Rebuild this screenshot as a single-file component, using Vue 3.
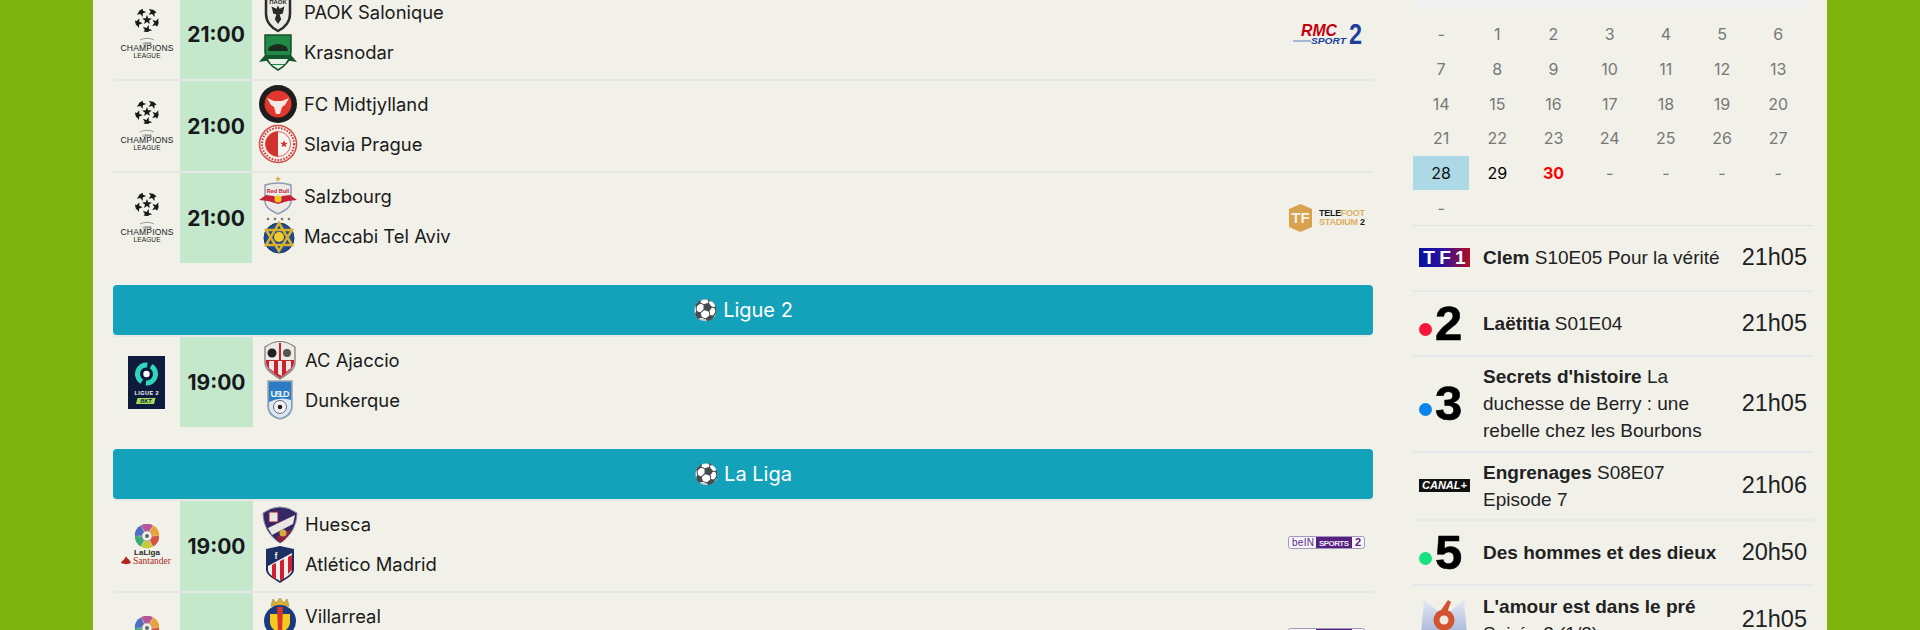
<template>
  <div class="page">
    <div class="panel">
      <main class="matches">
        <template v-for="group in groups" :key="group.id">
          <div v-if="group.name" class="banner"><span>⚽</span> {{ group.name }}</div>
          <div v-for="(m, i) in group.rows" :key="i" class="row" :class="{ wide: group.name, end: i === group.rows.length - 1 && group.id !== 'liga' }">
            <div class="league">
              <!-- Champions League -->
              <svg v-if="m.league === 'ucl'" width="56" height="54" viewBox="0 0 56 54">
                <defs>
                  <clipPath id="ball"><circle cx="28" cy="13" r="12" /></clipPath>
                </defs>
                <g clip-path="url(#ball)" fill="#1a1a1a">
                  <path :d="star(28, 13, 5)" />
                  <path v-for="(s, k) in ballStars" :key="k" :d="star(s[0], s[1], 5.200, s[2])" />
                </g>
                <path d="M21 33q7-3.500 14 0" fill="none" stroke="#666" stroke-width=".6" />
                <text x="28" y="37.500" class="ucl-uefa">UEFA</text>
                <text x="28" y="44" class="ucl-big" textLength="53">CHAMPIONS</text>
                <text x="28" y="51" class="ucl-small" textLength="27">LEAGUE</text>
              </svg>
              <!-- Ligue 2 -->
              <svg v-else-if="m.league === 'l2'" width="37" height="53" viewBox="0 0 37 53">
                <rect width="37" height="53" fill="#0e1b3d" />
                <circle cx="18.500" cy="18" r="9" fill="none" stroke="#2fd6bb" stroke-width="5" stroke-dasharray="24 4.300" transform="rotate(-60 18.500 18)" />
                <circle cx="18.500" cy="18" r="3.200" fill="#fff" />
                <text x="18.500" y="39" class="l2-text" textLength="24">LIGUE 2</text>
                <path d="M9.500 42h18l-1.500 6h-18z" fill="#a5dc5a" />
                <text x="18" y="47" class="l2-bkt">BKT</text>
              </svg>
              <!-- La Liga -->
              <svg v-else width="54" height="44" viewBox="0 0 54 44">
                <path v-for="p in ligaPetals" :key="p.c" d="M27 11 L21 1.500 A11 11 0 0 1 33 1.500 Z" :fill="p.c" :transform="`rotate(${p.a} 27 12)`" />
                <circle cx="27" cy="12" r="5" fill="#f1f1e9" stroke="#888" stroke-width=".6" />
                <circle cx="27" cy="12" r="2" fill="#666" />
                <text x="27" y="31" class="liga-top">LaLiga</text>
                <text x="32" y="40" class="liga-sub" textLength="38">Santander</text>
                <path d="M1 39c1-3 4-3 5-7 1 3 4 3 5 7-3 1.500-7 1.500-10 0z" fill="#b3261e" />
              </svg>
            </div>
            <div class="kickoff">{{ m.time }}</div>
            <div class="teams">
              <div v-for="t in m.teams" :key="t.name" class="team">
                <svg class="crest" width="40" height="40" viewBox="0 0 40 40">
                  <g v-if="t.id === 'paok'">
                    <path d="M8 -6h24v28c0 8-6 14-12 17-6-3-12-9-12-17z" fill="#eceae4" stroke="#2b2b2b" stroke-width="2.500" />
                    <path d="M20 7l2 4 6-3-2 9-4 1 2 6-4 6-4-6 2-6-4-1-2-9 6 3z" fill="#2b2b2b" transform="translate(4 8) scale(.8)" />
                    <text x="20" y="12" class="crest-txt">ΠΑΟΚ</text>
                  </g>
                  <g v-else-if="t.id === 'krasnodar'">
                    <path d="M7 3h26v17c0 9-6 14-13 18C13 34 7 29 7 20z" fill="#1f8a45" stroke="#174d2b" stroke-width="1.500" />
                    <path d="M11 15q9-6 18 0l1 4H10z" fill="#1d2a20" />
                    <path d="M1 30l6-7h26l6 7-6-1H7z" fill="#14552c" />
                    <path d="M10 27h20l-3 5h-14zM14 33h12l-6 4z" fill="#e8efe6" />
                  </g>
                  <g v-else-if="t.id === 'midtjylland'">
                    <circle cx="20" cy="20" r="19" fill="#1d1d1d" />
                    <circle cx="20" cy="20" r="13.500" fill="#e2372f" />
                    <path d="M9 14l7 3h8l7-3-4 7-3 2-2 7h-4l-2-7-3-2z" fill="#f7eae6" />
                  </g>
                  <g v-else-if="t.id === 'slavia'">
                    <circle cx="20" cy="20" r="18.500" fill="#f3ece8" stroke="#cf4a44" stroke-width="1.500" />
                    <circle cx="20" cy="20" r="12.500" fill="#f7f4f0" stroke="#cf4a44" stroke-width=".8" />
                    <path d="M20 7.500a12.500 12.500 0 0 0 0 25z" fill="#d2322d" />
                    <path :d="star(26, 20, 4)" fill="#d2322d" />
                    <circle cx="20" cy="20" r="16" fill="none" stroke="#d2322d" stroke-width="2" stroke-dasharray="1.500 1.500" />
                  </g>
                  <g v-else-if="t.id === 'salzburg'">
                    <path :d="star(20, 3, 3)" fill="#d9a93a" />
                    <path d="M7 9q13-4 26 0v16c0 7-7 10-13 13-6-3-13-6-13-13z" fill="#ece9e6" stroke="#8d9cb3" stroke-width="1.500" />
                    <path d="M1 24l7-5 8 1 4 5 4-5 8-1 7 5-9 1-10 3-10-3z" fill="#c6203a" />
                    <circle cx="20" cy="23" r="3.500" fill="#f3c51d" />
                    <text x="20" y="17" class="crest-red">Red Bull</text>
                  </g>
                  <g v-else-if="t.id === 'maccabi'">
                    <circle v-for="x in [10, 17, 24, 31]" :key="x" :cx="x" cy="3" r="1.300" fill="#777" />
                    <circle cx="21" cy="22" r="15" fill="#1c4a95" stroke="#20365f" />
                    <path d="M21 7l13 22H8zM21 35L8 14h26z" fill="none" stroke="#d9b02a" stroke-width="2.500" />
                    <circle cx="21" cy="21" r="5" fill="#f2cb2e" />
                  </g>
                  <g v-else-if="t.id === 'ajaccio'">
                    <path d="M5 7q15-11 30 0v16c0 7-9 12-15 16-6-4-15-9-15-16z" fill="#eee9e4" stroke="#777" stroke-width="1.200" />
                    <path d="M19 3h2v34h-2z" fill="#c9232d" />
                    <path d="M6 20h28v3c0 5-8 11-14 15-6-4-14-10-14-15z" fill="#c9232d" />
                    <path d="M9 21h5v11l-5-4zM18 21h4v15l-4-2zM26 21h5v7l-5 4z" fill="#eee9e4" />
                    <circle cx="12" cy="13" r="4.500" fill="#222" />
                    <circle cx="27" cy="13" r="4" fill="#555" />
                  </g>
                  <g v-else-if="t.id === 'dunkerque'">
                    <path d="M8 1h24v25c0 8-6 12-12 13-6-1-12-5-12-13z" fill="#2b7cc4" stroke="#9aa5ad" stroke-width="1.500" />
                    <path d="M9 22q11-6 22-2v7c0 6-6 10-11 11-5-1-11-5-11-11z" fill="#dbe8f3" />
                    <text x="20" y="17" class="crest-usl" textLength="19">USLD</text>
                    <circle cx="20" cy="27" r="6.500" fill="#f4f4f4" stroke="#333" stroke-width=".7" />
                    <circle cx="20" cy="27" r="2.300" fill="#222" />
                  </g>
                  <g v-else-if="t.id === 'huesca'">
                    <path d="M3 9q17-12 34 0c0 13-7 24-17 30C10 33 3 22 3 9z" fill="#352766" stroke="#8a8f9c" stroke-width="1" />
                    <path d="M8 24L35 11l-2 9-21 11z" fill="#eae6e2" />
                    <path d="M20 39c5-3 9-8 12-14L16 33z" fill="#8f1f3e" />
                    <rect x="9" y="8" width="9" height="10" fill="#eae6e2" stroke="#8f1f3e" />
                    <circle cx="23" cy="29" r="3.500" fill="#d3ab3f" />
                  </g>
                  <g v-else-if="t.id === 'atletico'">
                    <path d="M6 5l14-3 14 3v21c0 5-8 9-14 13C14 35 6 31 6 26z" fill="#1d2e63" />
                    <path d="M8 22L32 9v17c0 4-7 8-12 11-5-3-12-7-12-11z" fill="#f2efeb" />
                    <path d="M12 21l4-2v17l-4-3zM20 17l4-2v20l-4 2zM28 13l4-2v15l-4 4z" fill="#ce2232" />
                    <text x="16" y="15" class="crest-txt crest-wh">f</text>
                  </g>
                  <g v-else-if="t.id === 'villarreal'">
                    <path d="M11 10l2-7 3 4 4-5 4 5 3-4 2 7z" fill="#d9b339" stroke="#9a7a2a" stroke-width=".6" />
                    <circle cx="20" cy="25" r="16" fill="#1a3a7d" />
                    <path d="M10 18h20v8c0 6-5 9-10 11-5-2-10-5-10-11z" fill="#f3c91e" />
                    <path d="M17 11h6l-1 25h-4z" fill="#d8342d" />
                  </g>
                </svg>
                <span>{{ t.name }}</span>
              </div>
            </div>
            <div class="channel">
              <svg v-if="m.tv === 'rmc'" width="76" height="24" viewBox="0 0 76 24">
                <path d="M4 18.500h18v1H4z" fill="#5a7ac4" />
                <text x="12" y="14" class="rmc-big" textLength="36" lengthAdjust="spacingAndGlyphs">RMC</text>
                <text x="22" y="21.500" class="rmc-small" textLength="35" lengthAdjust="spacingAndGlyphs">SPORT</text>
                <text x="60" y="22" class="rmc-num" textLength="13" lengthAdjust="spacingAndGlyphs">2</text>
              </svg>
              <svg v-else-if="m.tv === 'tf'" width="76" height="28" viewBox="0 0 76 28">
                <path d="M11.500 0l11.500 5v18l-11.500 5L0 23V5z" fill="#d9a24e" />
                <text x="11.500" y="19" class="tf-logo">TF</text>
                <text x="30" y="12" class="tf-words" textLength="46">TELE<tspan fill="#dcae66">FOOT</tspan></text>
                <text x="30" y="21" class="tf-words" textLength="46"><tspan fill="#dcae66">STADIUM</tspan> 2</text>
              </svg>
              <svg v-else-if="m.tv === 'bein'" class="bein" width="77" height="13" viewBox="0 0 77 13">
                <rect x=".5" y=".5" width="76" height="12" rx="2" fill="#f7f6f6" stroke="#a597c0" />
                <text x="15" y="10" class="bein-txt" textLength="22">beIN</text>
                <rect x="28" y="1" width="36" height="11" fill="#54217f" />
                <text x="46" y="9.500" class="bein-sp" textLength="30">SPORTS</text>
                <text x="70" y="10" class="bein-num">2</text>
              </svg>
            </div>
          </div>
        </template>
      </main>

      <aside class="side">
        <div class="cal-head"></div>
        <div class="calendar">
          <span v-for="(d, i) in days" :key="i" class="day" :class="d.cls">{{ d.label }}</span>
        </div>
        <div v-for="p in programmes" :key="p.title" class="prog">
          <div class="logo">
            <div v-if="p.logo === 'tf1'" class="tf1"><span>T</span><span>F</span><span>1</span></div>
            <div v-else-if="p.logo === 'canal'" class="canal">CANAL+</div>
            <svg v-else-if="p.logo === 'm6'" width="50" height="50" viewBox="0 0 50 50">
              <defs>
                <linearGradient id="m6g" x1="0" y1="0" x2="0" y2="1">
                  <stop offset="0" stop-color="#e4e9f3" />
                  <stop offset="1" stop-color="#93a6d2" />
                </linearGradient>
              </defs>
              <path d="M1 50L5 5l20 16L45 5l4 45z" fill="url(#m6g)" />
              <circle cx="25" cy="25" r="10.500" fill="#d2532f" />
              <path d="M29 5l-11 16 8 2 6-16z" fill="#d2532f" />
              <circle cx="25" cy="25" r="4.500" fill="#f3e7e2" />
            </svg>
            <div v-else class="ftv"><i :style="{ background: p.dot }"></i><b>{{ p.logo }}</b></div>
          </div>
          <div class="prog-text"><b>{{ p.title }}</b> {{ p.sub }}</div>
          <div class="prog-time">{{ p.time }}</div>
        </div>
      </aside>
    </div>
  </div>
</template>

<script setup>
// five point star, used for the starball and a few crests
const star = (cx, cy, r, rot = 0) => {
  let d = ''
  for (let i = 0; i < 10; i++) {
    const rad = i % 2 ? r * 0.42 : r
    const a = ((rot + i * 36 - 90) * Math.PI) / 180
    d += `${i ? 'L' : 'M'}${(cx + rad * Math.cos(a)).toFixed(2)} ${(cy + rad * Math.sin(a)).toFixed(2)}`
  }
  return d + 'z'
}

const ballStars = [0, 72, 144, 216, 288].map((deg) => {
  const a = ((deg - 126) * Math.PI) / 180
  return [28 + 10 * Math.cos(a), 13 + 10 * Math.sin(a), deg + 20]
})

const ligaPetals = [
  { a: 0, c: '#b8559b' },
  { a: 60, c: '#e8a23a' },
  { a: 120, c: '#d8503f' },
  { a: 180, c: '#c7c93c' },
  { a: 240, c: '#42a877' },
  { a: 300, c: '#4f6fc0' },
]

const groups = [
  {
    id: 'ucl',
    name: '',
    rows: [
      { league: 'ucl', time: '21:00', tv: 'rmc', teams: [{ id: 'paok', name: 'PAOK Salonique' }, { id: 'krasnodar', name: 'Krasnodar' }] },
      { league: 'ucl', time: '21:00', teams: [{ id: 'midtjylland', name: 'FC Midtjylland' }, { id: 'slavia', name: 'Slavia Prague' }] },
      { league: 'ucl', time: '21:00', tv: 'tf', teams: [{ id: 'salzburg', name: 'Salzbourg' }, { id: 'maccabi', name: 'Maccabi Tel Aviv' }] },
    ],
  },
  {
    id: 'l2',
    name: 'Ligue 2',
    rows: [
      { league: 'l2', time: '19:00', teams: [{ id: 'ajaccio', name: 'AC Ajaccio' }, { id: 'dunkerque', name: 'Dunkerque' }] },
    ],
  },
  {
    id: 'liga',
    name: 'La Liga',
    rows: [
      { league: 'liga', time: '19:00', tv: 'bein', teams: [{ id: 'huesca', name: 'Huesca' }, { id: 'atletico', name: 'Atlético Madrid' }] },
      { league: 'liga', time: '19:00', tv: 'bein', teams: [{ id: 'villarreal', name: 'Villarreal' }] },
    ],
  },
]

const labels = ['-', ...Array.from({ length: 30 }, (_, i) => String(i + 1)), '-', '-', '-', '-', '-']
const days = labels.map((label) => {
  let cls = ''
  if (label === '28') cls = 'today'
  if (label === '29') cls = 'next'
  if (label === '30') cls = 'red'
  return { label, cls }
})

const programmes = [
  { logo: 'tf1', title: 'Clem', sub: 'S10E05 Pour la vérité', time: '21h05' },
  { logo: '2', dot: '#f5163b', title: 'Laëtitia', sub: 'S01E04', time: '21h05' },
  { logo: '3', dot: '#0a84e8', title: "Secrets d'histoire", sub: 'La duchesse de Berry : une rebelle chez les Bourbons', time: '21h05' },
  { logo: 'canal', title: 'Engrenages', sub: 'S08E07 Episode 7', time: '21h06' },
  { logo: '5', dot: '#16e07f', title: 'Des hommes et des dieux', sub: '', time: '20h50' },
  { logo: 'm6', title: "L'amour est dans le pré", sub: 'Soirée 2 (1/2)', time: '21h05' },
]
</script>

<style>
html, body { margin: 0; height: 630px; overflow: hidden; background: #7fb40f; }
</style>

<style scoped>
.page {
  height: 630px;
  overflow: hidden;
  background: #7fb40f;
  font-family: Inter, "Liberation Sans", sans-serif;
  color: #212529;
}
.panel {
  width: 1734px;
  height: 630px;
  margin-left: 93px;
  background: #f1f1e9;
  display: flex;
  padding: 0 20px;
  box-sizing: border-box;
  overflow: hidden;
}
.matches { width: 1260px; flex: none; margin-top: -11px; }
.row {
  height: 90px;
  display: flex;
  border-bottom: 2px solid #e6e8e8;
}
.row.end { border-bottom: none; margin-bottom: 22px; }
.league { width: 67px; flex: none; display: flex; align-items: center; justify-content: center; }
.kickoff {
  width: 72px;
  flex: none;
  background: #c5e7cc;
  display: flex;
  align-items: center;
  justify-content: center;
  font-size: 21px;
  font-weight: 700;
  color: #16191c;
}
.row.wide .kickoff { width: 73px; }
.teams { flex: 1; padding: 3px 0 0 6px; }
.row.wide .teams { padding-left: 7px; }
.team { height: 40px; display: flex; align-items: center; gap: 6px; font-size: 18.400px; color: #1b1b1b; }
.row.wide .team { gap: 5px; }
.crest { flex: none; overflow: visible; }
.channel { width: 77px; flex: none; margin-right: 8px; display: flex; align-items: center; justify-content: flex-end; }
.banner {
  height: 50px;
  border-radius: 4px;
  background: #14a2ba;
  box-shadow: 0 2px 0 #e6e8e8;
  margin-bottom: 2px;
  color: #fff;
  font-size: 20px;
  display: flex;
  align-items: center;
  justify-content: center;
  gap: 5px;
}
svg text { font-family: "Liberation Sans", sans-serif; }
.ucl-uefa { font-size: 3.500px; text-anchor: middle; fill: #444; }
.ucl-big { font-size: 8.500px; text-anchor: middle; fill: #222; }
.ucl-small { font-size: 6.500px; text-anchor: middle; fill: #222; }
.l2-text { font-size: 5.500px; font-weight: 700; text-anchor: middle; fill: #fff; }
.l2-bkt { font-size: 5.500px; font-weight: 700; font-style: italic; text-anchor: middle; fill: #0e1b3d; }
.liga-top { font-size: 8px; font-weight: 700; text-anchor: middle; fill: #2a2a2a; }
.liga-sub { font-family: "Liberation Serif", serif !important; font-size: 9.500px; text-anchor: middle; fill: #a92b24; }
.crest-txt { font-size: 6px; font-weight: 700; text-anchor: middle; fill: #2b2b2b; }
.crest-wh { fill: #f2efeb; font-size: 9px; }
.crest-red { font-size: 5.500px; font-weight: 700; text-anchor: middle; fill: #c6203a; }
.crest-usl { font-size: 9px; font-weight: 700; text-anchor: middle; fill: #eaf2f8; }
.rmc-big { font-size: 17px; font-weight: 700; font-style: italic; fill: #c4000f; }
.rmc-small { font-size: 8.500px; font-weight: 700; font-style: italic; fill: #1a3fa0; }
.rmc-num { font-size: 29px; font-weight: 700; fill: #1d409c; }
.tf-logo { font-size: 15px; font-weight: 700; text-anchor: middle; fill: #f1f1e9; }
.tf-words { font-size: 9px; font-weight: 700; fill: #1c1c1c; }
.bein { margin-bottom: 7px; }
.bein-txt { font-size: 10px; text-anchor: middle; fill: #5b2a91; }
.bein-sp { font-size: 8px; font-weight: 700; text-anchor: middle; fill: #ece4f4; }
.bein-num { font-size: 11px; font-weight: 700; text-anchor: middle; fill: #54217f; }

.side { width: 400px; margin-left: 40px; flex: none; font-family: "Liberation Sans", sans-serif; }
.cal-head { height: 9px; width: 394px; background: #f0f0f0; }
.calendar {
  display: grid;
  grid-template-columns: repeat(7, 56.200px);
  grid-auto-rows: 34.700px;
  padding-top: 8px;
  border-bottom: 1px solid #dfe3e4;
  font-family: Inter, "Liberation Sans", sans-serif;
  font-size: 16px;
  color: #777;
}
.day { display: flex; align-items: center; justify-content: center; }
.today { background: #add8e6; color: #111; }
.next { color: #000; }
.red { color: #f00; font-weight: 700; }
.prog {
  display: flex;
  align-items: center;
  border-bottom: 2px solid #e6e8ea;
  min-height: 65.500px;
  box-sizing: border-box;
  padding: 6.200px 6px;
}
.logo { width: 64px; flex: none; display: flex; align-items: center; }
.prog-text { flex: 1; font-size: 19px; line-height: 27px; color: #222; padding-right: 4px; }
.prog-time { flex: none; width: 70px; text-align: right; font-size: 23.500px; color: #222; }
.tf1 {
  width: 51px;
  height: 19px;
  background: linear-gradient(90deg, #06109f, #2a12a0 45%, #b00d24);
  display: flex;
  justify-content: space-evenly;
  align-items: center;
  color: #fff;
  font: 900 19px "Liberation Sans", sans-serif;
}
.canal { width: 51px; height: 13px; background: #111; color: #fff; font: italic 900 11px/13px "Liberation Sans", sans-serif; text-align: center; }
.ftv { display: flex; align-items: center; }
.ftv i { width: 13px; height: 13px; border-radius: 50%; margin-top: 12px; }
.ftv b { font: 700 49px/1 "Liberation Sans", sans-serif; color: #000; margin-left: 3px; -webkit-text-stroke: .6px #000; }
</style>
